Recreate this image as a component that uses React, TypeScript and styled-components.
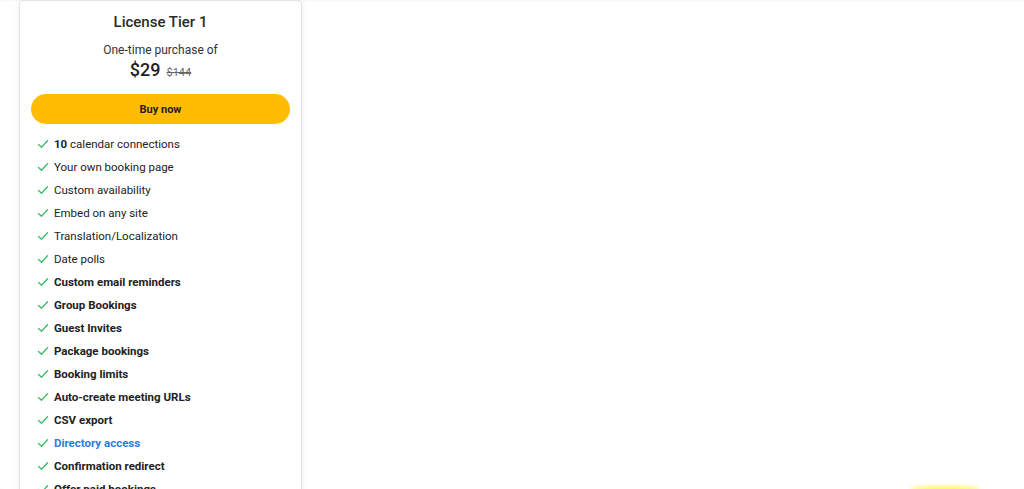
import React from 'react';
import styled, { createGlobalStyle } from 'styled-components';

const GlobalStyle = createGlobalStyle`
  html, body {
    margin: 0;
    padding: 0;
    background: #ffffff;
    font-family: Roboto, "Liberation Sans", Arial, sans-serif;
    color: #1f1f1f;
    overflow: hidden;
  }
`;

const Page = styled.div`
  height: 489px;
  padding: 0 0 0 19px;
  box-sizing: border-box;
  position: relative;
  overflow: hidden;
  box-shadow: inset 0 1px 2px rgba(0, 0, 0, 0.04);
`;

const Card = styled.div`
  width: 283px;
  box-sizing: border-box;
  border: 1px solid #e3e3e3;
  border-radius: 4px;
  background: #fff;
  box-shadow: 0 1px 6px rgba(0, 0, 0, 0.08);
  padding: 11px 11px 0 11px;
`;

const Title = styled.h3`
  margin: 0;
  font-size: 15px;
  font-weight: 500;
  text-align: center;
  line-height: 20px;
  color: #2a2a2a;
`;

const Subtitle = styled.p`
  margin: 10px 0 0 0;
  font-size: 12px;
  line-height: 16px;
  text-align: center;
  color: #333;
`;

const PriceRow = styled.div`
  display: flex;
  justify-content: center;
  align-items: baseline;
  gap: 6px;
  margin-top: 0;
`;

const Price = styled.span`
  font-size: 18px;
  font-weight: 500;
  line-height: 24px;
  color: #1f1f1f;
`;

const OldPrice = styled.span`
  font-size: 11px;
  color: #666;
  text-decoration: line-through;
`;

const BuyButton = styled.button`
  display: block;
  width: 100%;
  height: 30px;
  margin-top: 12px;
  border: none;
  border-radius: 15px;
  background: #ffbc00;
  font-family: inherit;
  font-size: 11px;
  font-weight: 700;
  color: #222;
  cursor: pointer;
`;

const FeatureList = styled.ul`
  list-style: none;
  margin: 8px 0 0 0;
  padding: 0 0 0 6px;
`;

const Feature = styled.li<{ $bold?: boolean; $link?: boolean }>`
  display: flex;
  align-items: center;
  gap: 5px;
  height: 23px;
  font-size: 11.5px;
  font-weight: ${(p) => (p.$bold ? 700 : 400)};
  color: ${(p) => (p.$link ? '#2b7de0' : '#222')};
`;

const Check = styled.svg`
  width: 12px;
  height: 12px;
  flex-shrink: 0;
`;

const Glow = styled.div`
  position: absolute;
  left: 910px;
  top: 486px;
  width: 70px;
  height: 6px;
  border-radius: 50%;
  background: #fff23a;
  filter: blur(2px);
  opacity: 0.8;
`;

const CheckIcon = () => (
  <Check viewBox="0 0 12 12">
    <path d="M1.5 6.5 L4.5 9.3 L10.5 2.8" fill="none" stroke="#3dbb6a" strokeWidth="1.3" strokeLinecap="round" strokeLinejoin="round" />
  </Check>
);

type Item = { text: React.ReactNode; bold?: boolean; link?: boolean };

const features: Item[] = [
  { text: <><b>10</b> calendar connections</> },
  { text: 'Your own booking page' },
  { text: 'Custom availability' },
  { text: 'Embed on any site' },
  { text: 'Translation/Localization' },
  { text: 'Date polls' },
  { text: 'Custom email reminders', bold: true },
  { text: 'Group Bookings', bold: true },
  { text: 'Guest Invites', bold: true },
  { text: 'Package bookings', bold: true },
  { text: 'Booking limits', bold: true },
  { text: 'Auto-create meeting URLs', bold: true },
  { text: 'CSV export', bold: true },
  { text: 'Directory access', bold: true, link: true },
  { text: 'Confirmation redirect', bold: true },
  { text: 'Offer paid bookings', bold: true },
];

export default function App() {
  return (
    <>
      <GlobalStyle />
      <Page>
        <Card>
          <Title>License Tier 1</Title>
          <Subtitle>One-time purchase of</Subtitle>
          <PriceRow>
            <Price>$29</Price>
            <OldPrice>$144</OldPrice>
          </PriceRow>
          <BuyButton>Buy now</BuyButton>
          <FeatureList>
            {features.map((f, i) => (
              <Feature key={i} $bold={f.bold} $link={f.link}>
                <CheckIcon />
                <span>{f.text}</span>
              </Feature>
            ))}
          </FeatureList>
        </Card>
        <Glow />
      </Page>
    </>
  );
}
